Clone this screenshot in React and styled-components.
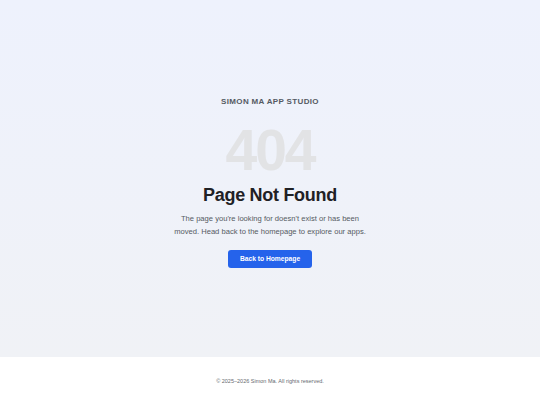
import React from "react";
import styled, { createGlobalStyle } from "styled-components";

const GlobalStyle = createGlobalStyle`
  html, body {
    margin: 0;
    padding: 0;
    background: #ffffff;
    font-family: "Liberation Sans", Arial, sans-serif;
  }
`;

export default function App() {
  return (
    <Page>
      <GlobalStyle />
      <Main>
        <Content>
          <Studio>SIMON MA APP STUDIO</Studio>
          <Code>404</Code>
          <Title>Page Not Found</Title>
          <Text>
            The page you're looking for doesn't exist or has been moved. Head
            back to the homepage to explore our apps.
          </Text>
          <HomeButton href="#">Back to Homepage</HomeButton>
        </Content>
      </Main>
      <Footer>© 2025–2026 Simon Ma. All rights reserved.</Footer>
    </Page>
  );
}

const Page = styled.div`
  width: 100%;
  min-height: 405px;
  display: flex;
  flex-direction: column;
`;

const Main = styled.main`
  height: 357px;
  display: flex;
  align-items: center;
  justify-content: center;
  background: linear-gradient(180deg, #eef2fd 0%, #f0f2f6 100%);
`;

const Content = styled.div`
  display: flex;
  flex-direction: column;
  align-items: center;
  text-align: center;
  margin-top: 8px;
`;

const Studio = styled.div`
  font-size: 8px;
  font-weight: 700;
  letter-spacing: 0.35px;
  color: #555a63;
  line-height: 10px;
`;

const Code = styled.div`
  margin-top: 17px;
  font-size: 57px;
  font-weight: 700;
  letter-spacing: -2px;
  line-height: 52px;
  color: #e2e3e5;
`;

const Title = styled.h1`
  margin: 8px 0 0;
  font-size: 18px;
  font-weight: 700;
  letter-spacing: -0.3px;
  line-height: 22px;
  color: #1f2125;
`;

const Text = styled.p`
  margin: 7px 0 0;
  width: 200px;
  font-size: 7.6px;
  line-height: 12.5px;
  color: #555a63;
`;

const HomeButton = styled.a`
  margin-top: 12px;
  display: inline-block;
  padding: 0 12px;
  height: 17.5px;
  line-height: 17.5px;
  border-radius: 3px;
  background: #2563eb;
  color: #ffffff;
  font-size: 6.7px;
  font-weight: 700;
  text-decoration: none;
`;

const Footer = styled.footer`
  height: 48px;
  display: flex;
  align-items: center;
  justify-content: center;
  background: #ffffff;
  font-size: 5.5px;
  color: #666a70;
`;
